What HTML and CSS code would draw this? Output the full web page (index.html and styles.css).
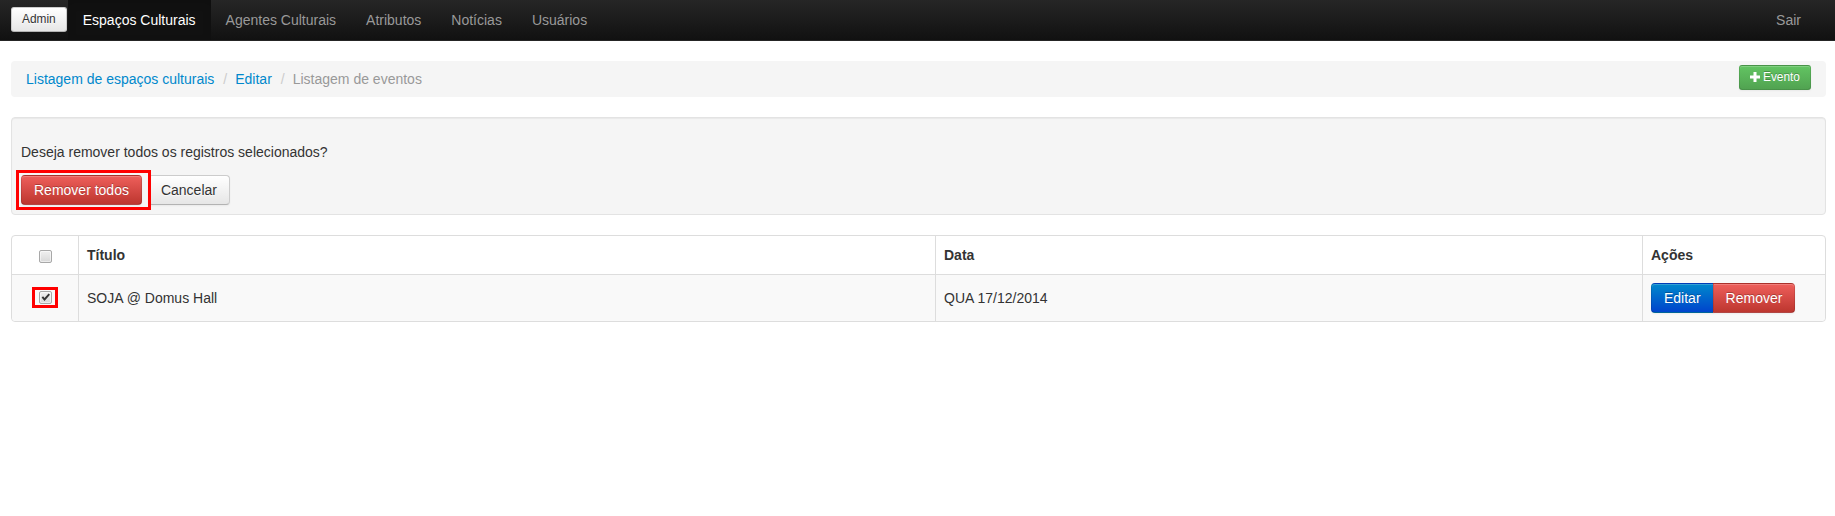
FILE: index.html
```html
<!DOCTYPE html>
<html lang="pt-BR">
<head>
<meta charset="utf-8">
<title>Listagem de eventos</title>
<link rel="stylesheet" href="styles.css">
</head>
<body>
<header class="navbar">
  <div class="navbar-inner">
    <a class="btn btn-small brand-btn" href="#">Admin</a>
    <nav class="nav">
      <a class="nav-link active" href="#">Espaços Culturais</a>
      <a class="nav-link" href="#">Agentes Culturais</a>
      <a class="nav-link" href="#">Atributos</a>
      <a class="nav-link" href="#">Notícias</a>
      <a class="nav-link" href="#">Usuários</a>
    </nav>
    <a class="nav-link nav-right" href="#">Sair</a>
  </div>
</header>

<main class="container">
  <div class="breadcrumb">
    <a class="crumb-link" href="#">Listagem de espaços culturais</a>
    <span class="divider">/</span>
    <a class="crumb-link" href="#">Editar</a>
    <span class="divider">/</span>
    <span class="crumb-active">Listagem de eventos</span>
    <a class="btn btn-small btn-success btn-new" href="#">
      <svg class="icon-plus" width="10" height="10" viewBox="0 0 10 10" aria-hidden="true"><path d="M3.5 0h3v3.5H10v3H6.5V10h-3V6.5H0v-3h3.5z" fill="#fff"/></svg>Evento
    </a>
  </div>

  <div class="well">
    <p class="confirm-text">Deseja remover todos os registros selecionados?</p>
    <div class="confirm-actions">
      <span class="annotated annotated-btn"><a class="btn btn-danger" href="#">Remover todos</a></span>
      <a class="btn" href="#">Cancelar</a>
    </div>
  </div>

  <table class="table">
    <thead>
      <tr>
        <th class="col-check"><span class="check"></span></th>
        <th class="col-title">Título</th>
        <th class="col-date">Data</th>
        <th class="col-actions">Ações</th>
      </tr>
    </thead>
    <tbody>
      <tr>
        <td class="col-check"><span class="annotated annotated-check"><span class="check checked"><svg width="11" height="11" viewBox="0 0 11 11" aria-hidden="true"><path d="M1.6 5.6 L3.1 4.3 L4.5 6 L8.6 1.4 L10 2.7 L4.5 9 Z" fill="#333"/></svg></span></span></td>
        <td>SOJA @ Domus Hall</td>
        <td>QUA 17/12/2014</td>
        <td>
          <div class="btn-group">
            <a class="btn btn-primary" href="#">Editar</a><a class="btn btn-danger" href="#">Remover</a>
          </div>
        </td>
      </tr>
    </tbody>
  </table>
</main>
</body>
</html>
```

FILE: styles.css
```css
* {
  box-sizing: border-box;
}

html, body {
  margin: 0;
  padding: 0;
  background: #fff;
}

body {
  font-family: "Liberation Sans", Arial, Helvetica, sans-serif;
  font-size: 14px;
  line-height: 20px;
  color: #333;
}

a {
  text-decoration: none;
}

/* ---------- Navbar ---------- */
.navbar-inner {
  display: flex;
  align-items: center;
  height: 41px;
  padding: 0 19px 0 11px;
  background-color: #1b1b1b;
  background-image: linear-gradient(to bottom, #262626 0%, #111 100%);
  border-bottom: 1px solid #252525;
}

.nav {
  display: flex;
  align-items: stretch;
  height: 40px;
}

.nav-link {
  display: block;
  padding: 10px 15px;
  line-height: 20px;
  color: #999;
  font-size: 14px;
}

.nav-link.active {
  color: #fff;
  background-color: #111;
  box-shadow: inset 0 3px 8px rgba(0, 0, 0, 0.125);
}

.nav-right {
  margin-left: auto;
}

.brand-btn {
  margin-right: 1px;
  margin-top: -1px;
}

/* ---------- Buttons ---------- */
.btn {
  display: inline-block;
  padding: 4px 12px;
  font-size: 14px;
  line-height: 20px;
  color: #333;
  text-align: center;
  text-shadow: 0 1px 1px rgba(255, 255, 255, 0.75);
  white-space: nowrap;
  background-color: #f5f5f5;
  background-image: linear-gradient(to bottom, #fff, #e6e6e6);
  border: 1px solid #ccc;
  border-bottom-color: #b3b3b3;
  border-radius: 4px;
  box-shadow: inset 0 1px 0 rgba(255, 255, 255, 0.2), 0 1px 2px rgba(0, 0, 0, 0.05);
}

.btn-small {
  padding: 2px 10px;
  font-size: 11.9px;
  line-height: 19px;
  border-radius: 3px;
}

.btn-success {
  color: #fff;
  text-shadow: 0 -1px 0 rgba(0, 0, 0, 0.25);
  background-color: #5bb75b;
  background-image: linear-gradient(to bottom, #62c462, #51a351);
  border-color: rgba(0, 0, 0, 0.1) rgba(0, 0, 0, 0.1) rgba(0, 0, 0, 0.25);
}

.btn-danger {
  color: #fff;
  text-shadow: 0 -1px 0 rgba(0, 0, 0, 0.25);
  background-color: #da4f49;
  background-image: linear-gradient(to bottom, #ee5f5b, #bd362f);
  border-color: rgba(0, 0, 0, 0.1) rgba(0, 0, 0, 0.1) rgba(0, 0, 0, 0.25);
}

.btn-primary {
  color: #fff;
  text-shadow: 0 -1px 0 rgba(0, 0, 0, 0.25);
  background-color: #006dcc;
  background-image: linear-gradient(to bottom, #08c, #04c);
  border-color: rgba(0, 0, 0, 0.1) rgba(0, 0, 0, 0.1) rgba(0, 0, 0, 0.25);
}

.btn-group {
  display: inline-flex;
}

.btn-group .btn {
  border-radius: 0;
}

.btn-group .btn + .btn {
  margin-left: -1px;
}

.btn-group .btn:first-child {
  border-radius: 4px 0 0 4px;
}

.btn-group .btn:last-child {
  border-radius: 0 4px 4px 0;
}

/* ---------- Layout ---------- */
.container {
  padding: 20px 9px 0 11px;
}

/* ---------- Breadcrumb ---------- */
.breadcrumb {
  display: flex;
  align-items: flex-start;
  padding: 8px 15px;
  margin-bottom: 20px;
  background-color: #f5f5f5;
  border-radius: 4px;
}

.crumb-link {
  color: #08c;
}

.divider {
  padding: 0 8px 0 9px;
  color: #ccc;
}

.crumb-active {
  color: #999;
}

.btn-new {
  margin: -4px 0 -1px auto;
  display: inline-flex;
  align-items: center;
}

.icon-plus {
  margin-right: 3px;
  margin-top: -1px;
}

/* ---------- Well ---------- */
.well {
  padding: 24px 9px 9px;
  margin-bottom: 20px;
  background-color: #f5f5f5;
  border: 1px solid #e3e3e3;
  border-radius: 4px;
  box-shadow: inset 0 1px 1px rgba(0, 0, 0, 0.05);
}

.confirm-text {
  margin: 0 0 13px;
}

.confirm-actions {
  display: flex;
  gap: 6px;
}

/* ---------- Annotations (red marker boxes) ---------- */
.annotated {
  position: relative;
  display: inline-flex;
}

.annotated::after {
  content: "";
  position: absolute;
  border: 3px solid #f00;
  pointer-events: none;
}

.annotated-btn::after {
  top: -5px;
  right: -9px;
  bottom: -5px;
  left: -5px;
}

.annotated-check::after {
  top: -4px;
  right: -6px;
  bottom: -4px;
  left: -7px;
}

/* ---------- Table ---------- */
.table {
  width: 100%;
  table-layout: fixed;
  border-collapse: separate;
  border-spacing: 0;
  border: 1px solid #ddd;
  border-radius: 4px;
  margin-top: 1px;
}

.table th,
.table td {
  box-sizing: content-box;
  padding: 8px;
  line-height: 20px;
  text-align: left;
  vertical-align: middle;
  border-left: 1px solid #ddd;
}

.table th {
  padding: 9px 8px 9px;
  font-weight: bold;
}

.table th:first-child,
.table td:first-child {
  border-left: 0;
}

.table tbody td {
  border-top: 1px solid #ddd;
  background-color: #f9f9f9;
}

.table tbody tr:last-child td:first-child {
  border-bottom-left-radius: 4px;
}

.table tbody tr:last-child td:last-child {
  border-bottom-right-radius: 4px;
}

.table .col-check {
  text-align: center;
  width: 50px;
}

th.col-title {
  width: 840px;
}

th.col-date {
  width: 690px;
}

/* ---------- Checkbox ---------- */
.check {
  display: inline-flex;
  align-items: center;
  justify-content: center;
  width: 13px;
  height: 13px;
  vertical-align: middle;
  background-image: linear-gradient(to bottom, #f0f0f0, #d8d8d8);
  border: 1px solid #a8a8a8;
  border-radius: 2px;
  box-shadow: inset 0 0 0 1px rgba(255, 255, 255, 0.5);
}

.check svg {
  display: block;
}
```
